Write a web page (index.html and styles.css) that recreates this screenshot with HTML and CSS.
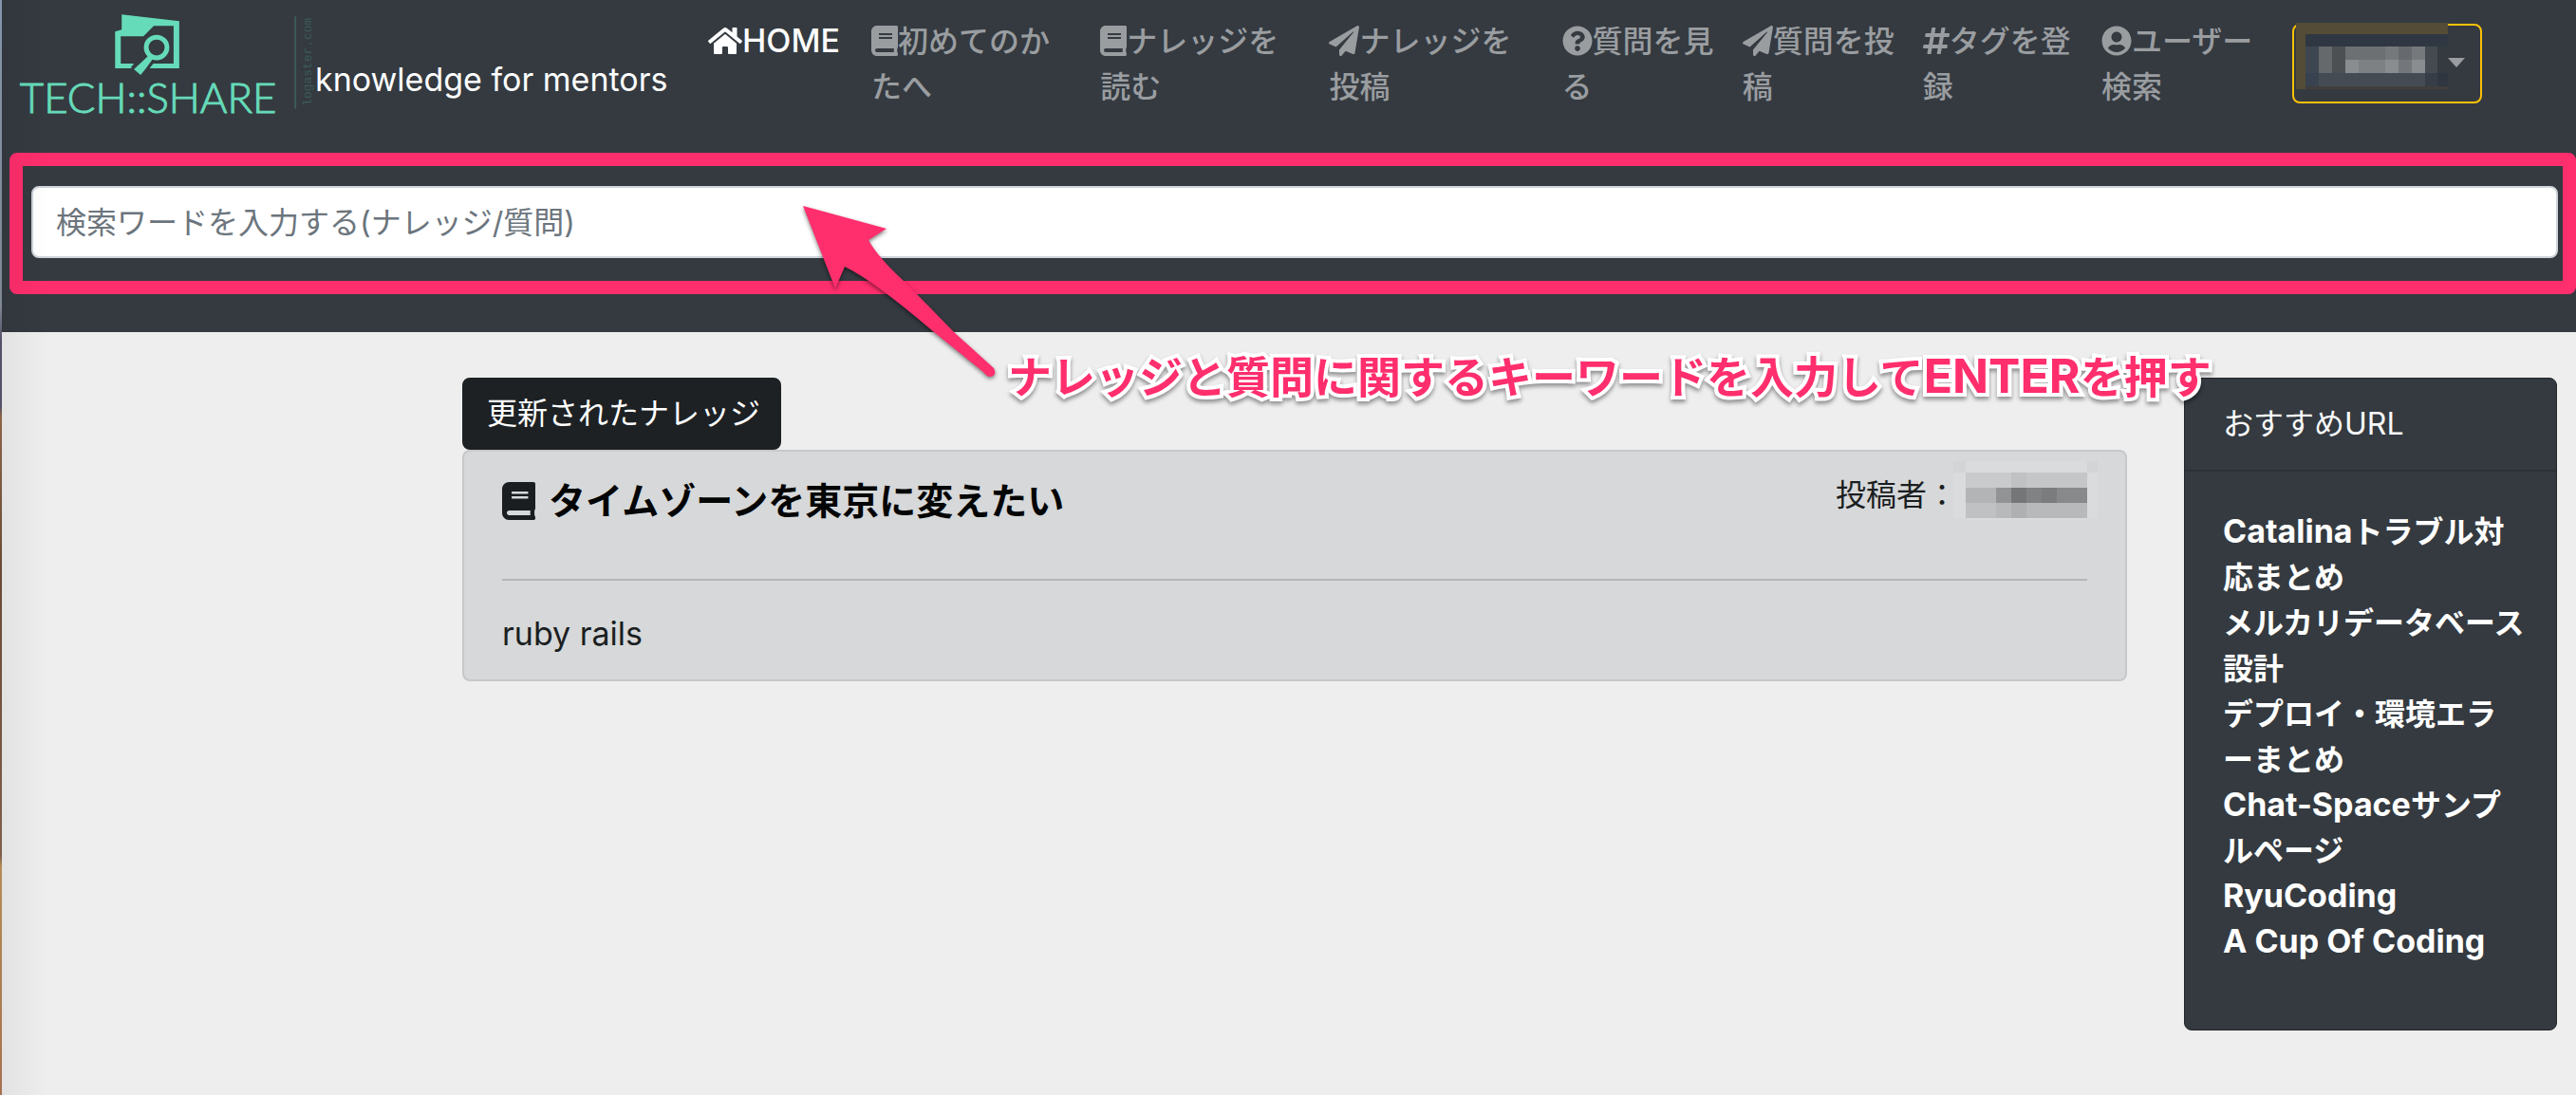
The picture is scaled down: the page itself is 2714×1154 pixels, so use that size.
FILE: index.html
```html
<!DOCTYPE html>
<html lang="ja">
<head>
<meta charset="utf-8">
<meta name="viewport" content="width=device-width, initial-scale=1">
<title>TECH::SHARE</title>
<link rel="stylesheet" href="styles.css">
</head>
<body>
<svg class="sprite" aria-hidden="true">
  <symbol id="i-home" viewBox="0 0 576 512"><path d="M280.37 148.26L96 300.11V464a16 16 0 0 0 16 16l112.06-.29a16 16 0 0 0 15.92-16V368a16 16 0 0 1 16-16h64a16 16 0 0 1 16 16v95.64a16 16 0 0 0 16 16.05L464 480a16 16 0 0 0 16-16V300L295.67 148.26a12.19 12.19 0 0 0-15.3 0zM571.6 251.47L488 182.56V44.05a12 12 0 0 0-12-12h-56a12 12 0 0 0-12 12v72.61L318.47 43a48 48 0 0 0-61 0L4.34 251.47a12 12 0 0 0-1.6 16.9l25.5 31A12 12 0 0 0 45.15 301l235.22-193.74a12.19 12.19 0 0 1 15.3 0L530.9 301a12 12 0 0 0 16.9-1.6l25.5-31a12 12 0 0 0-1.7-16.93z"/></symbol>
  <symbol id="i-book" viewBox="0 0 448 512"><path d="M448 360V24c0-13.3-10.7-24-24-24H96C43 0 0 43 0 96v320c0 53 43 96 96 96h328c13.3 0 24-10.7 24-24v-16c0-7.500-3.500-14.300-8.900-18.700-4.200-15.400-4.200-59.300 0-74.700 5.400-4.300 8.900-11.100 8.900-18.600zM128 134c0-3.300 2.700-6 6-6h212c3.300 0 6 2.700 6 6v20c0 3.300-2.700 6-6 6H134c-3.300 0-6-2.700-6-6v-20zm0 64c0-3.300 2.700-6 6-6h212c3.300 0 6 2.700 6 6v20c0 3.300-2.700 6-6 6H134c-3.300 0-6-2.700-6-6v-20zm253.400 250H96c-17.700 0-32-14.300-32-32 0-17.600 14.400-32 32-32h285.400c-1.900 17.100-1.900 46.900 0 64z"/></symbol>
  <symbol id="i-plane" viewBox="0 0 512 512"><path d="M476 3.200L12.500 270.600c-18.100 10.400-15.800 35.600 2.200 43.200L121 358.400l287.300-253.200c5.500-4.900 13.300 2.600 8.600 8.300L176 407v80.500c0 23.600 28.500 32.900 42.500 15.800L282 426l124.600 52.200c14.200 6 30.400-2.900 33-18.200l72-432C515 7.800 493.300-6.800 476 3.200z"/></symbol>
  <symbol id="i-question" viewBox="0 0 512 512"><path d="M504 256c0 136.997-111.043 248-248 248S8 392.997 8 256C8 119.083 119.043 8 256 8s248 111.083 248 248zM262.655 90c-54.497 0-89.255 22.957-116.549 63.758-3.536 5.286-2.353 12.415 2.715 16.258l34.699 26.310c5.205 3.947 12.621 3.008 16.665-2.122 17.864-22.658 30.113-35.797 57.303-35.797 20.429 0 45.698 13.148 45.698 32.958 0 14.976-12.363 22.667-32.534 33.976C247.128 238.528 216 254.941 216 296v4c0 6.627 5.373 12 12 12h56c6.627 0 12-5.373 12-12v-1.333c0-28.462 83.186-29.647 83.186-106.667 0-58.002-60.165-102-116.531-102zM256 338c-25.365 0-46 20.635-46 46 0 25.364 20.635 46 46 46s46-20.636 46-46c0-25.365-20.635-46-46-46z"/></symbol>
  <symbol id="i-hash" viewBox="0 0 448 512"><path d="M440.667 182.109l7.143-40c1.313-7.355-4.342-14.109-11.813-14.109h-74.810l14.623-81.891C377.123 38.754 371.468 32 363.997 32h-40.632a12 12 0 0 0-11.813 9.891L296.175 128H197.540l14.623-81.891C213.477 38.754 207.822 32 200.350 32h-40.632a12 12 0 0 0-11.813 9.891L132.528 128H53.432a12 12 0 0 0-11.813 9.891l-7.143 40C33.163 185.246 38.818 192 46.289 192h74.810L98.242 320H19.146a12 12 0 0 0-11.813 9.891l-7.143 40C-1.123 377.246 4.532 384 12.003 384h74.810L72.190 465.891C70.877 473.246 76.532 480 84.003 480h40.632a12 12 0 0 0 11.813-9.891L151.826 384h98.634l-14.623 81.891C234.523 473.246 240.178 480 247.650 480h40.632a12 12 0 0 0 11.813-9.891L315.472 384h79.096a12 12 0 0 0 11.813-9.891l7.143-40c1.313-7.355-4.342-14.109-11.813-14.109h-74.810l22.857-128h79.096a12 12 0 0 0 11.813-9.891zM261.889 320h-98.634l22.857-128h98.634l-22.857 128z"/></symbol>
  <symbol id="i-user" viewBox="0 0 496 512"><path d="M248 8C111 8 0 119 0 256s111 248 248 248 248-111 248-248S385 8 248 8zm0 96c48.600 0 88 39.400 88 88s-39.400 88-88 88-88-39.400-88-88 39.400-88 88-88zm0 344c-58.700 0-111.300-26.600-146.500-68.200 18.800-35.400 55.600-59.800 98.500-59.800 2.400 0 4.800.4 7.100 1.100 13 4.200 26.600 6.900 40.900 6.900 14.300 0 28-2.700 40.900-6.900 2.300-.7 4.700-1.100 7.100-1.100 42.900 0 79.700 24.400 98.500 59.800C359.300 421.400 306.700 448 248 448z"/></symbol>
</svg>

<header class="navbar">
  <div class="navbar-top">
    <a class="brand" href="#">
      <svg class="brand-logo" viewBox="0 0 334 130" role="img" aria-label="TECH::SHARE">
        <g fill="#66dbb9">
          <path fill-rule="evenodd" d="M129 15L190 22V72H122V33L129 31ZM128 38V67H184V27H163L152 38Z"/>
          <path d="M166 50L145 76" fill="none" stroke="#343a40" stroke-width="16"/>
          <circle cx="166" cy="50" r="11" fill="#343a40" stroke="#66dbb9" stroke-width="5"/>
          <path d="M157 59L162 62L154 73L149 79L142 73Z"/>
          <text class="logo-name" x="21" y="119">TECH::SHARE</text>
        </g>
        <path d="M313 17V115" stroke="#3d5b56" stroke-width="2"/>
        <text class="logo-mark" transform="translate(330 112) rotate(-90)">logaster.com</text>
      </svg>
      <span class="brand-text">knowledge for mentors</span>
    </a>
    <nav class="menu">
      <ul class="menu-list">
        <li><a class="active" href="#"><svg class="icon w-home"><use href="#i-home"/></svg><span class="latin">HOME</span></a></li>
        <li><a href="#"><svg class="icon w-book"><use href="#i-book"/></svg>初めてのか<br>たへ</a></li>
        <li><a href="#"><svg class="icon w-book"><use href="#i-book"/></svg>ナレッジを<br>読む</a></li>
        <li><a href="#"><svg class="icon"><use href="#i-plane"/></svg>ナレッジを<br>投稿</a></li>
        <li><a href="#"><svg class="icon"><use href="#i-question"/></svg>質問を見<br>る</a></li>
        <li><a href="#"><svg class="icon"><use href="#i-plane"/></svg>質問を投<br>稿</a></li>
        <li><a href="#"><svg class="icon w-book"><use href="#i-hash"/></svg>タグを登<br>録</a></li>
        <li><a href="#"><svg class="icon"><use href="#i-user"/></svg>ユーザー<br>検索</a></li>
      </ul>
      <button class="account" type="button" aria-label="アカウント">
        <svg class="account-name" viewBox="0 0 160 70" shape-rendering="crispEdges" aria-hidden="true">
          <path fill="#343a40" d="M0 0H160V70H0Z"/>
          <path fill="#544c37" d="M0 0H160V12H10V70H0Z"/>
          <path fill="#2f3742" d="M10 12H160V25H10Z"/>
          <path fill="#3e4651" d="M10 25H24V53H10Z"/>
          <path fill="#66696c" d="M24 25H38V53H24Z"/>
          <path fill="#4c5053" d="M38 25H52V53H38Z"/>
          <path fill="#6d7073" d="M52 25H94V39H52Z"/>
          <path fill="#76797c" d="M94 25H108V39H94ZM122 25H136V39H122Z"/>
          <path fill="#66696e" d="M108 25H122V39H108Z"/>
          <path fill="#8a8d90" d="M52 39H66V53H52ZM94 39H108V53H94ZM122 39H136V53H122Z"/>
          <path fill="#7e8184" d="M66 39H94V53H66Z"/>
          <path fill="#73777b" d="M108 39H122V53H108Z"/>
          <path fill="#454a51" d="M136 25H149V53H136Z"/>
          <path fill="#394250" d="M10 53H24V67H10Z"/>
          <path fill="#444b53" d="M24 53H136V67H24Z"/>
          <path fill="#363d47" d="M136 53H149V67H136Z"/>
          <path fill="#2f3640" d="M149 53H160V67H149Z"/>
          <path fill="#403e3b" d="M10 67H160V70H10Z"/>
        </svg>
        <span class="caret"></span>
      </button>
    </nav>
  </div>
  <form class="search">
    <input class="search-input" type="search" aria-label="検索" placeholder="検索ワードを入力する(ナレッジ/質問)">
  </form>
</header>

<main class="content">
  <section class="feed">
    <button class="feed-tab" type="button">更新されたナレッジ</button>
    <article class="card">
      <div class="card-head">
        <h2 class="card-title"><svg class="icon-lg"><use href="#i-book"/></svg><a href="#">タイムゾーンを東京に変えたい</a></h2>
        <p class="author">投稿者：<span class="author-name">
          <svg class="author-mosaic" viewBox="0 0 152 62" shape-rendering="crispEdges" aria-hidden="true">
            <path fill="#dadbdc" d="M13 0H141V12H13ZM0 12H152V60H0ZM13 60H141V62H13Z"/>
            <path fill="#d3d4d5" d="M0 0H13V12H0ZM141 0H152V12H141Z"/>
            <path fill="#c9cacb" d="M13 12H61V28H13Z"/>
            <path fill="#c0c1c2" d="M61 12H77V28H61Z"/>
            <path fill="#c5c6c7" d="M77 12H141V28H77Z"/>
            <path fill="#b3b4b5" d="M13 28H45V44H13Z"/>
            <path fill="#929394" d="M45 28H61V44H45Z"/>
            <path fill="#757677" d="M61 28H77V44H61Z"/>
            <path fill="#818283" d="M77 28H93V44H77Z"/>
            <path fill="#7b7c7d" d="M93 28H109V44H93Z"/>
            <path fill="#88898a" d="M109 28H141V44H109Z"/>
            <path fill="#c0c1c2" d="M13 44H45V60H13Z"/>
            <path fill="#b8b9ba" d="M45 44H61V60H45ZM77 44H141V60H77Z"/>
            <path fill="#afb0b1" d="M61 44H77V60H61Z"/>
          </svg></span></p>
      </div>
      <hr class="rule">
      <p class="tags latin">ruby rails</p>
    </article>
  </section>
  <aside class="side">
    <h3 class="side-head">おすすめURL</h3>
    <ul class="side-list">
      <li><a href="#"><span class="latin">Catalina</span>トラブル対<br>応まとめ</a></li>
      <li><a href="#">メルカリデータベース<br>設計</a></li>
      <li><a href="#">デプロイ・環境エラ<br>ーまとめ</a></li>
      <li><a href="#"><span class="latin">Chat-Space</span>サンプ<br>ルページ</a></li>
      <li><a class="latin" href="#">RyuCoding</a></li>
      <li><a class="latin" href="#">A Cup Of Coding</a></li>
    </ul>
  </aside>
</main>

<svg class="arrow" viewBox="840 210 220 200" aria-hidden="true">
  <path fill="#ff2e6d" d="M846 217L934 241L915 253Q924 270 952 296Q978 322 1005 350L1047 388Q1051 396 1043 397Q1040 397 1036 392L984 350Q921 296 890 281L880 304Z"/>
</svg>
<p class="note">ナレッジと質問に関するキーワードを入力して<span class="note-key">ENTER</span>を押す</p>
</body>
</html>
```
FILE: styles.css
```css
* { box-sizing: border-box; }

body {
  margin: 0;
  min-height: 100vh;
  position: relative;
  background: #eee;
  color: #1b1e21;
  font: 400 32px/48px Inter, "Noto Sans CJK JP", sans-serif;
}

/* window edge on the left */
body::before {
  content: "";
  position: absolute;
  z-index: 2;
  inset: 0 auto 0 0;
  width: 2px;
  background: linear-gradient(#8494ab, #7f8792 28%, #55506a 31%, #55506a 37%, #8a6548 38%, #6b4a35 52%, #7d5f4a 78%, #b58c55 79%, #a5714e);
}
body::after {
  content: "";
  position: absolute;
  inset: 0 auto 0 2px;
  width: 50px;
  background: linear-gradient(90deg, rgba(0, 0, 0, .05), transparent);
  pointer-events: none;
}

a { color: inherit; text-decoration: none; }
ul, p, h2, h3 { margin: 0; padding: 0; }
ul { list-style: none; }
.sprite { display: none; }
.latin { font-size: 34px; line-height: 1; }

.navbar {
  background: #343a40;
  padding-bottom: 40px;
}
.navbar-top {
  display: flex;
  align-items: flex-start;
  height: 161px;
}
.brand {
  display: flex;
  flex: none;
  width: 746px;
  color: #fff;
}
.brand-logo { width: 332px; height: 130px; flex: none; }
.brand-text { padding-top: 60px; font-size: 34px; white-space: nowrap; }
.logo-name { font: 300 44px Lato, sans-serif; stroke: #66dbb9; stroke-width: 1px; }
.logo-mark { font: 13px "Liberation Mono", monospace; fill: #3d5b56; }

.menu {
  flex: 1;
  display: flex;
  padding: 20px 99px 0 0;
}
.menu-list {
  flex: 1;
  display: grid;
  grid-template-columns: 172fr 241fr 241fr 245fr 190fr 190fr 188fr 201fr;
  font-weight: 500;
  color: #9a9da0;
  white-space: nowrap;
}
.menu-list .active { color: #fff; }
.icon {
  display: inline-block;
  width: 32px;
  height: 32px;
  vertical-align: -4px;
  fill: currentColor;
}
.w-home { width: 36px; }
.w-book { width: 28px; }

.account {
  position: relative;
  flex: none;
  width: 200px;
  height: 84px;
  margin-top: 5px;
  padding: 0;
  border: 2px solid #ffc107;
  border-radius: 8px;
  background: transparent;
}
.account-name {
  position: absolute;
  left: 2px;
  top: -3px;
  width: 160px;
  height: 70px;
}
.caret {
  position: absolute;
  right: 16px;
  top: 34px;
  border: 9px solid transparent;
  border-top: 10px solid #9a9da0;
  border-bottom: 0;
}

.search {
  margin-left: 10px;
  padding: 21px 5px 24px 9px;
  border: 14px solid #ff2e6d;
  border-radius: 8px;
}
.search-input {
  display: block;
  width: 100%;
  height: 76px;
  padding: 12px 24px;
  border: 2px solid #ced4da;
  border-radius: 8px;
  background: #fff;
  font: inherit;
  color: #495057;
}
.search-input::placeholder { color: #6c757d; opacity: 1; }

.content {
  display: flex;
  align-items: flex-start;
  gap: 60px;
  padding: 48px 20px 70px 487px;
}
.feed { flex: 1; }
.feed-tab {
  display: block;
  padding: 12px 20px 12px 24px;
  border: 2px solid #1d2124;
  border-radius: 8px;
  background: #1d2124;
  color: #fff;
  font: inherit;
}
.card {
  padding: 22px 40px 24px;
  border: 2px solid #c6c8ca;
  border-radius: 8px;
  background: #d6d8d9;
}
.card-head {
  display: flex;
  justify-content: space-between;
  align-items: flex-start;
}
.card-title {
  font-size: 39px;
  line-height: 60px;
  color: #040505;
}
.icon-lg {
  width: 35px;
  height: 40px;
  margin-right: 14px;
  vertical-align: -6px;
  fill: #1b1e21;
}
.author { display: flex; white-space: nowrap; }
.author-name {
  position: relative;
  width: 129px;
  height: 48px;
  margin-left: 8px;
}
.author-mosaic {
  position: absolute;
  left: -12px;
  top: -12px;
  width: 152px;
  height: 62px;
}
.rule {
  margin: 52px 0 32px;
  border: 0;
  border-top: 2px solid #b4b6b8;
}
.tags { line-height: 48px; }

.side {
  flex: none;
  width: 393px;
  border: 1px solid #22262a;
  border-radius: 8px;
  background: #343a40;
  color: #fff;
}
.side-head {
  padding: 24px 40px;
  border-bottom: 2px solid #2c3136;
  font-size: 32px;
  font-weight: 400;
  color: #f8f9fa;
}
.side-list {
  padding: 40px 0 68px 40px;
  font-weight: 700;
  white-space: nowrap;
}

/* callout drawn over the page */
.arrow {
  position: absolute;
  left: 840px;
  top: 210px;
  width: 220px;
  height: 200px;
  filter: drop-shadow(0 2px 2px rgba(0, 0, 0, .5));
}
.note {
  position: absolute;
  left: 1062px;
  top: 362px;
  font-size: 46px;
  line-height: 70px;
  font-weight: 700;
  color: #ff2e6d;
  white-space: nowrap;
  -webkit-text-stroke: 8px #fff;
  paint-order: stroke fill;
  filter: drop-shadow(0 3px 2px rgba(0, 0, 0, .4));
}
.note-key { font-size: 50px; line-height: 1; }
```
